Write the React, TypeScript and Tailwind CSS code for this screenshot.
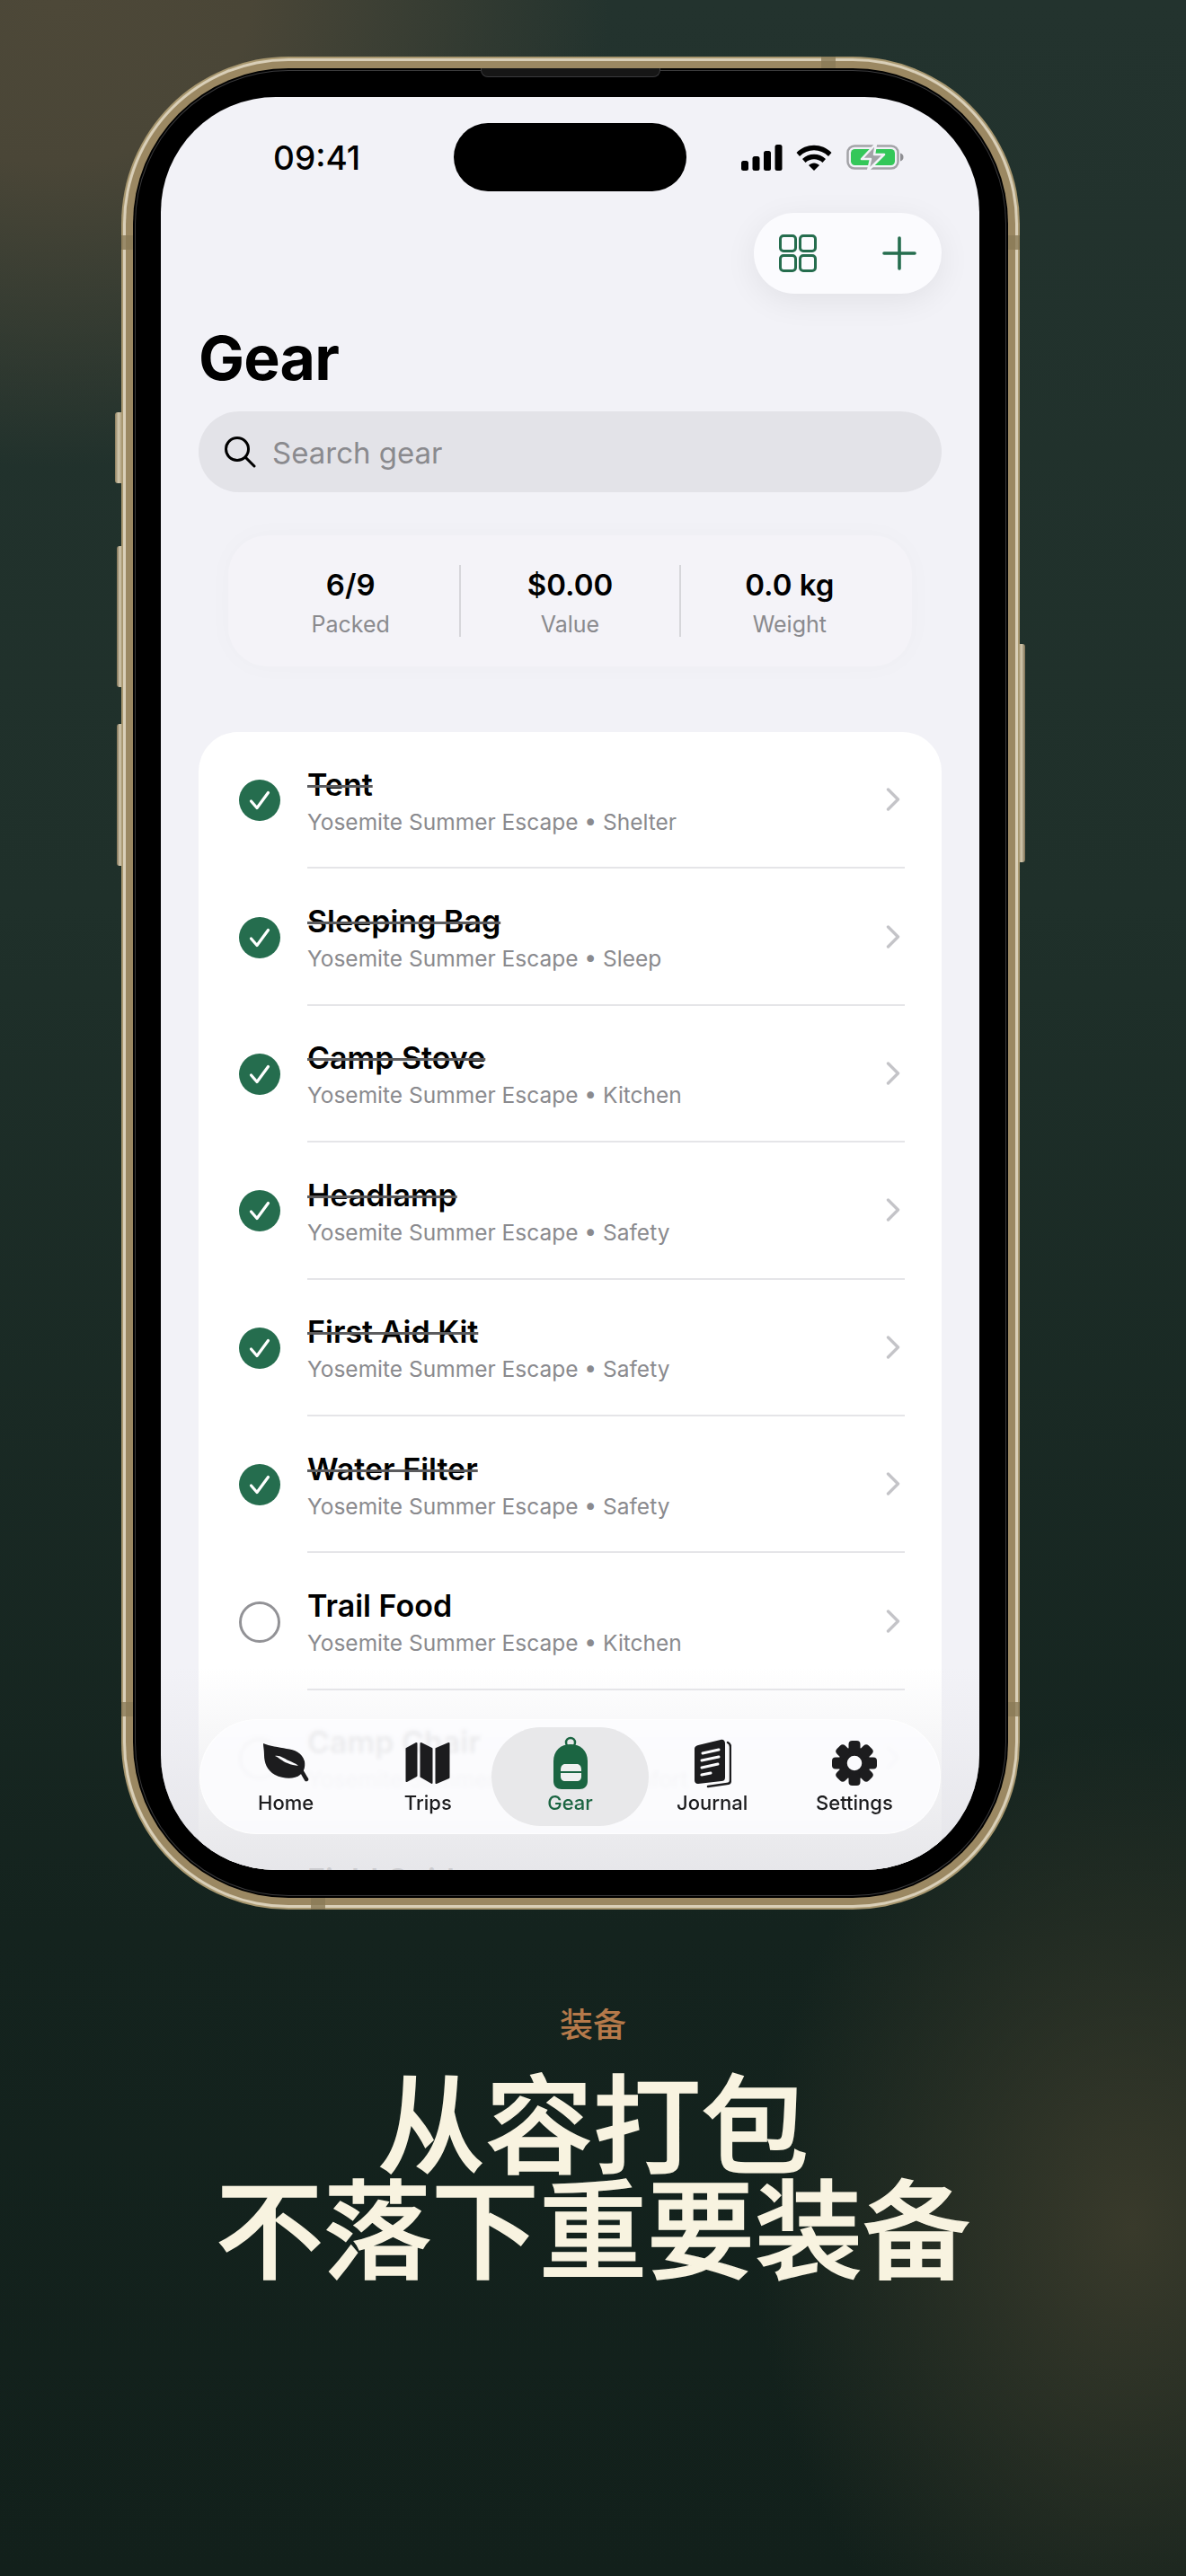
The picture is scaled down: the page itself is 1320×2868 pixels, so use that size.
interface GearItem {
  name: string;
  category: string;
  packed: boolean;
}

const gearItems: GearItem[] = [
  { name: 'Tent', category: 'Shelter', packed: true },
  { name: 'Sleeping Bag', category: 'Sleep', packed: true },
  { name: 'Camp Stove', category: 'Kitchen', packed: true },
  { name: 'Headlamp', category: 'Safety', packed: true },
  { name: 'First Aid Kit', category: 'Safety', packed: true },
  { name: 'Water Filter', category: 'Safety', packed: true },
  { name: 'Trail Food', category: 'Kitchen', packed: false },
  { name: 'Camp Chair', category: 'Comfort', packed: false },
  { name: 'Field Guide', category: 'Comfort', packed: false },
];

const stats = [
  { value: '6/9', label: 'Packed' },
  { value: '$0.00', label: 'Value' },
  { value: '0.0 kg', label: 'Weight' },
];

const LeafIcon = () => (
  <svg width="52" height="46" viewBox="0 0 52 46">
    <path
      d="M1 1C8 4 18 5 27 7C36 8 44 11 47 21C48 28 46 33 42 36C36 41 24 41 14 36C5 31 2 22 2 14C2 8 1 5 1 1Z"
      fill="#1c1c1e"
    />
    <path d="M14 15C20 14 24 18 29 20C33 22 37 23 40 26C36 25 32 25 28 23C22 21 19 17 14 15Z" fill="#fbfbfd" />
    <path d="M41 28C44 32 46 36 49 41" fill="none" stroke="#1c1c1e" strokeWidth="4.5" strokeLinecap="round" />
  </svg>
);

const MapIcon = () => (
  <svg width="50" height="48" viewBox="-0.5 -1 50 48" fill="#1c1c1e" stroke="#1c1c1e" strokeWidth="2" strokeLinejoin="round">
    <path d="M1 7L12 1V37L1 43Z" />
    <path d="M17 1L29 7V45L17 38Z" />
    <path d="M34 7L48 1V39L34 45Z" />
  </svg>
);

const BackpackIcon = () => (
  <svg width="38" height="60" viewBox="0 0 38 60">
    <circle cx="19" cy="7" r="5" fill="none" stroke="#1b6542" strokeWidth="2.5" />
    <path d="M19 9C30 9 38 16 38 28V50C38 56 34 59 29 59H9C4 59 0 56 0 50V28C0 16 8 9 19 9Z" fill="#1b6542" />
    <path d="M8 38C8 33 10 31 13 31H26C29 31 31 33 31 38V39H8Z" fill="#f0f0f0" />
    <path d="M8 41H31V45C31 48 29 50 26 50H13C10 50 8 48 8 45Z" fill="#f0f0f0" />
  </svg>
);

const JournalIcon = () => (
  <svg width="42" height="55" viewBox="0 0 42 55">
    <path d="M5 7L30 1C33 0 35 2 35 5V43C35 46 33 47 31 47L5 50C2 50 1 48 1 46V11C1 9 2 8 5 7Z" fill="#1c1c1e" />
    <path d="M38 4C40 5 41 7 41 9V46C41 49 39 50 37 50L16 53" fill="none" stroke="#1c1c1e" strokeWidth="2.5" strokeLinecap="round" />
    <g stroke="#fbfbfd" strokeWidth="3" strokeLinecap="round">
      <path d="M10 16L28 12" />
      <path d="M9 24L28 20" />
      <path d="M9 32L27 28" />
      <path d="M9 40L19 38" />
    </g>
  </svg>
);

const SettingsIcon = () => (
  <svg width="50" height="50" viewBox="0 0 50 50">
    <circle cx="25" cy="25" r="13" fill="none" stroke="#1c1c1e" strokeWidth="9.5" />
    {[0, 45, 90, 135, 180, 225, 270, 315].map((angle) => (
      <rect key={angle} x="18.5" y="0" width="13" height="13" rx="4" fill="#1c1c1e" transform={`rotate(${angle} 25 25)`} />
    ))}
  </svg>
);

const tabs = [
  { label: 'Home', icon: <LeafIcon /> },
  { label: 'Trips', icon: <MapIcon /> },
  { label: 'Gear', icon: <BackpackIcon /> },
  { label: 'Journal', icon: <JournalIcon /> },
  { label: 'Settings', icon: <SettingsIcon /> },
];

const StatusIcons = () => (
  <div className="ml-[61px] flex items-center">
    <svg width="46" height="29" viewBox="0 0 46 29" fill="#000">
      <rect x="0" y="18" width="8" height="11" rx="2.5" />
      <rect x="12.5" y="13" width="8" height="16" rx="2.5" />
      <rect x="25" y="7" width="8" height="22" rx="2.5" />
      <rect x="37.5" y="0" width="8" height="29" rx="2.5" />
    </svg>
    <svg className="ml-[15px]" width="40" height="29" viewBox="0 0 40 29">
      <path d="M0.5 9C11 -2 29 -2 39.5 9L36 13C27 4 13 4 4 13Z" fill="#000" />
      <path d="M7 16C14 9 26 9 33 16L29.5 20C24 15 16 15 10.5 20Z" fill="#000" />
      <path d="M14 23C17.5 19.5 22.5 19.5 26 23L20 29Z" fill="#000" />
    </svg>
    <svg className="ml-[16px]" width="64" height="30" viewBox="0 0 64 30">
      <rect x="1.5" y="2.5" width="56" height="25" rx="7.5" fill="none" stroke="#a3a3a7" strokeWidth="2.5" />
      <rect x="5" y="6" width="49" height="18" rx="4.5" fill="#34c759" />
      <path d="M60 10.5C62.5 11 63.5 13 63.5 15S62.5 19 60 19.5Z" fill="#8f8f93" />
      <path d="M33 0L17 17H27L24 30L42 12H31Z" fill="#a3a3a7" stroke="#f2f2f7" strokeWidth="2.5" strokeLinejoin="round" />
    </svg>
  </div>
);

const GearRow = ({ item }: { item: GearItem }) => (
  <div className="flex h-[152.4px] items-center pl-[45px] pr-[41px]">
    {item.packed ? (
      <div className="flex h-[46px] w-[46px] shrink-0 items-center justify-center rounded-full bg-[#256d4e]">
        <svg width="24" height="22" viewBox="0 0 24 22">
          <path d="M2.5 12L9 19.5L21.5 2.5" fill="none" stroke="#fff" strokeWidth="3.2" strokeLinecap="round" strokeLinejoin="round" />
        </svg>
      </div>
    ) : (
      <div className="h-[46px] w-[46px] shrink-0 rounded-full border-[3.5px] border-[#929296]" />
    )}
    <div className="ml-[30px] flex h-full flex-1 items-center justify-between border-b-2 border-[#e5e5e8]">
      <div className="pt-[4px]">
        <div
          className={`text-[34px] font-semibold leading-[40px] text-black ${
            item.packed ? 'line-through decoration-[#5c5c5e] decoration-[2.5px]' : ''
          }`}
        >
          {item.name}
        </div>
        <div className="mt-[5px] text-[24.5px] leading-[32px] text-[#8a8a8e]">
          Yosemite Summer Escape • {item.category}
        </div>
      </div>
      <svg className="mr-[5px]" width="16" height="26" viewBox="0 0 16 26">
        <path d="M2.5 2L13.5 13L2.5 24" fill="none" stroke="#c4c4c8" strokeWidth="3.4" strokeLinecap="round" strokeLinejoin="round" />
      </svg>
    </div>
  </div>
);

const Phone = () => (
  <div className="relative ml-[135px] mt-[63px] h-[2063px] w-[1000px] shrink-0">
    {/* side buttons */}
    <div className="absolute left-[-7px] top-[396px] h-[79px] w-[8px] rounded-l-[3px] bg-[linear-gradient(90deg,#8f7f5d,#d3c9b0_50%,#a6956f)]" />
    <div className="absolute left-[-5px] top-[545px] h-[157px] w-[6px] rounded-l-[3px] bg-[linear-gradient(90deg,#7d6f52,#d3c9b0_60%,#a6956f)]" />
    <div className="absolute left-[-5px] top-[743px] h-[158px] w-[6px] rounded-l-[3px] bg-[linear-gradient(90deg,#7d6f52,#d3c9b0_60%,#a6956f)]" />
    <div className="absolute right-[-6px] top-[654px] h-[243px] w-[7px] rounded-r-[3px] bg-[linear-gradient(270deg,#7d6f52,#d3c9b0_60%,#a6956f)]" />

    <div className="h-full w-full rounded-[186px] bg-[#a8976f] p-[2px]">
      <div className="h-full w-full rounded-[184px] bg-[#d9cfb8] p-[3px]">
        <div className="h-full w-full rounded-[181px] bg-[#9b8862] p-[8px]">
          <div className="h-full w-full rounded-[173px] bg-black p-[2px]">
            <div className="h-full w-full rounded-[171px] bg-[#3a3a3c] p-[1px]">
              <div className="h-full w-full rounded-[170px] bg-black pb-[28px] pl-[28px] pr-[29px] pt-[29px]">
                <Screen />
              </div>
            </div>
          </div>
        </div>
      </div>
    </div>

    {/* antenna bands and speaker */}
    <div className="absolute left-[779px] top-0 h-[13px] w-[16px] bg-[#8a7a58]/80" />
    <div className="absolute left-[211px] bottom-0 h-[13px] w-[16px] bg-[#8a7a58]/80" />
    <div className="absolute left-0 top-[199px] h-[16px] w-[13px] bg-[#8a7a58]/80" />
    <div className="absolute right-0 top-[199px] h-[16px] w-[13px] bg-[#8a7a58]/80" />
    <div className="absolute left-0 top-[1832px] h-[16px] w-[13px] bg-[#8a7a58]/80" />
    <div className="absolute right-0 top-[1832px] h-[16px] w-[13px] bg-[#8a7a58]/80" />
    <div className="absolute left-[400px] top-[13px] h-[10px] w-[200px] rounded-b-[8px] border border-t-0 border-[#3a3a3c] bg-[#161616]" />
  </div>
);

const Screen = () => (
  <div className="relative flex h-full w-full flex-col overflow-hidden rounded-[128px] bg-[#f2f2f7] font-['Inter',sans-serif]">
    <div className="mt-[29px] flex h-[76px] shrink-0 items-center">
      <div className="ml-[125px] w-[201px] text-[37px] font-medium leading-none text-black">09:41</div>
      <div className="h-[76px] w-[259px] rounded-[38px] bg-black" />
      <StatusIcons />
    </div>

    <div className="mr-[42px] mt-[24px] flex h-[90px] w-[209px] shrink-0 items-center self-end rounded-[45px] bg-[#fbfbfe] pl-[28px] shadow-[0_8px_36px_rgba(0,0,0,0.07)]">
      <svg width="42" height="42" viewBox="0 0 42 42" fill="none" stroke="#256d4e" strokeWidth="3">
        <rect x="1.5" y="1.5" width="17" height="17" rx="3.5" />
        <rect x="23.5" y="1.5" width="17" height="17" rx="3.5" />
        <rect x="1.5" y="23.5" width="17" height="17" rx="3.5" />
        <rect x="23.5" y="23.5" width="17" height="17" rx="3.5" />
      </svg>
      <svg className="ml-[73px]" width="38" height="38" viewBox="0 0 38 38" fill="none" stroke="#256d4e" strokeWidth="3.6" strokeLinecap="round">
        <path d="M19 2V36" />
        <path d="M2 19H36" />
      </svg>
    </div>

    <h1 className="ml-[42px] mt-[31px] shrink-0 text-[68px] font-bold leading-[80px] tracking-[-0.8px] text-black">Gear</h1>

    <div className="mx-[42px] mt-[20px] flex h-[90px] shrink-0 items-center rounded-[45px] bg-[#e3e3e8] pl-[28px]">
      <svg width="36" height="36" viewBox="0 0 36 36" fill="none" stroke="#000" strokeWidth="3" strokeLinecap="round">
        <circle cx="15" cy="15" r="12.5" />
        <path d="M24 24L34 34" />
      </svg>
      <span className="ml-[18px] pt-[3px] text-[33px] text-[#8a8a8e]">Search gear</span>
    </div>

    <div className="mx-[75px] mt-[48px] flex h-[146px] shrink-0 items-center rounded-[44px] bg-[#f4f3f8] px-[15px] shadow-[0_0_30px_rgba(0,0,0,0.025)]">
      {stats.map((stat, index) => (
        <div
          key={stat.label}
          className={`flex h-[80px] flex-1 flex-col items-center pt-[2px] ${index > 0 ? 'border-l-2 border-[#d6d6da]' : ''}`}
        >
          <div className="text-[33px] font-semibold leading-[40px] text-black">{stat.value}</div>
          <div className="mt-[9px] text-[25px] leading-[30px] text-[#8a8a8e]">{stat.label}</div>
        </div>
      ))}
    </div>

    <div className="mx-[42px] mt-[73px] shrink-0 rounded-[44px] bg-white">
      {gearItems.map((item) => (
        <GearRow key={item.name} item={item} />
      ))}
    </div>

    {/* fade under the tab bar */}
    <div className="pointer-events-none absolute bottom-0 left-0 h-[225px] w-full bg-gradient-to-b from-[#e4e4e8]/0 via-[#e4e4e8]/45 to-[#e4e4e8]/90" />

    <div className="absolute bottom-[40px] left-[43px] flex h-[128px] w-[825px] items-center rounded-[64px] border border-white/70 bg-[#fcfcfe]/90 px-[16px] backdrop-blur-[2px]">
      {tabs.map((tab) => {
        const active = tab.label === 'Gear';
        return (
          <div key={tab.label} className="relative flex h-[110px] flex-1 flex-col items-center justify-end pb-[13px]">
            {active && <div className="absolute inset-y-0 -left-[8px] -right-[8px] rounded-[55px] bg-[#e8e8ea]" />}
            <div className="relative flex h-[54px] items-center justify-center">{tab.icon}</div>
            <div className={`relative mt-[4px] text-[22px] font-medium leading-[26px] ${active ? 'text-[#1b6542]' : 'text-[#1c1c1e]'}`}>
              {tab.label}
            </div>
          </div>
        );
      })}
    </div>
  </div>
);

export default function App() {
  return (
    <div className="flex h-[2868px] w-[1320px] flex-col overflow-hidden bg-[radial-gradient(ellipse_620px_520px_at_60px_0px,#4d4838_0%,#4a4637_35%,rgba(74,70,55,0)_100%),radial-gradient(ellipse_420px_560px_at_1260px_2480px,#393a2b_0%,rgba(57,58,43,0)_100%),linear-gradient(180deg,#23332e_0%,#1f302a_35%,#14231e_75%,#12201b_100%)]">
      <Phone />
      <div className="mt-[102px] text-center font-['Noto_Sans_CJK_SC',sans-serif] text-[37px] font-medium leading-[48px] text-[#b5794a]">
        装备
      </div>
      <h2 className="mt-[25px] text-center font-['Noto_Sans_CJK_SC',sans-serif] text-[120px] font-medium leading-[117px] text-[#f8f3e0] [-webkit-text-stroke:1.5px_#f8f3e0]">
        从容打包
        <br />
        不落下重要装备
      </h2>
    </div>
  );
}
